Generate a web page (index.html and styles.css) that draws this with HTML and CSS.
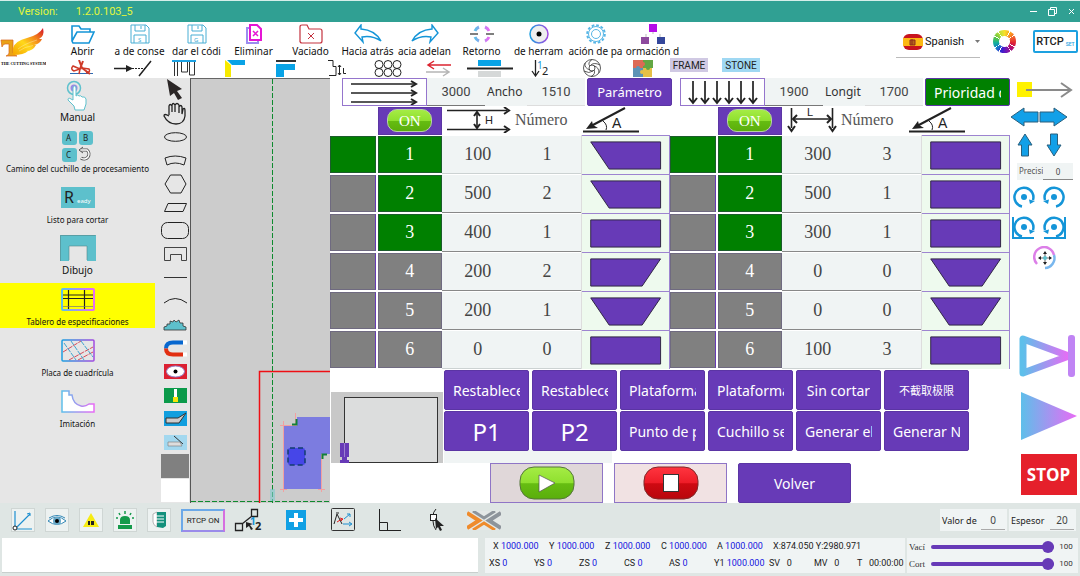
FILE: index.html
```
<!DOCTYPE html>
<html lang="es">
<head>
    <meta charset="UTF-8">
    <title>Version: 1.2.0.103_5</title>
    <link rel="stylesheet" href="styles.css">
</head>
<body>
  <svg class="defs" width="0" height="0">
    <defs>
      <linearGradient id="cyanPink"><stop offset="0" stop-color="#5ebfea"/><stop offset="1" stop-color="#e86bf5"/></linearGradient>
      <linearGradient id="bluePurple"><stop offset="0" stop-color="#1d9fe0"/><stop offset="1" stop-color="#a24be0"/></linearGradient>
      <linearGradient id="fire" x1="0" y1="1" x2="1" y2="0"><stop offset="0" stop-color="#f5a300"/><stop offset=".4" stop-color="#ffd81a"/><stop offset=".7" stop-color="#f2801c"/><stop offset="1" stop-color="#d3102a"/></linearGradient>
      <linearGradient id="green" x2="0" y2="1"><stop offset="0" stop-color="#a5ec45"/><stop offset=".5" stop-color="#8fe02f"/><stop offset=".52" stop-color="#66bd12"/><stop offset="1" stop-color="#5aae0c"/></linearGradient>
      <linearGradient id="red" x2="0" y2="1"><stop offset="0" stop-color="#ff3540"/><stop offset=".5" stop-color="#ee1c27"/><stop offset=".52" stop-color="#cf0a12"/><stop offset="1" stop-color="#b8060c"/></linearGradient>
    </defs>
    <symbol id="shape-left" viewBox="0 0 90 38"><path d="M9 5.500H81V33.500H28z" class="shape"/></symbol>
    <symbol id="shape-rect" viewBox="0 0 90 38"><path d="M9 5.500H81V33.500H9z" class="shape"/></symbol>
    <symbol id="shape-right" viewBox="0 0 90 38"><path d="M9 5.500H81L62 33.500H9z" class="shape"/></symbol>
    <symbol id="shape-trap" viewBox="0 0 90 38"><path d="M9 5.500H81L62 33.500H28z" class="shape"/></symbol>
    <symbol id="angle" viewBox="0 0 58 28">
      <path d="M0 25.500H56M42 2L8 20" stroke="#222" stroke-width="2" fill="none"/>
      <path d="M3 23L9 15L10 19L15 22z" fill="#222"/>
      <path d="M20 15q5 4 3 9" stroke="#222" fill="none"/>
    </symbol>
    <symbol id="rotate" viewBox="0 0 24 22">
      <path d="M10 20.500A9.500 9.500 0 1 1 21 14" fill="none" stroke="#1495d8" stroke-width="2.500"/>
      <path d="M17 13.500L23 15L18 18z" fill="#1495d8"/><circle cx="12" cy="11" r="3" fill="#1495d8"/>
    </symbol>
  </svg>

  <header class="title-bar">
    <span>Version:</span>
    <span class="version-number">1.2.0.103_5</span>
    <div class="window-buttons">
      <button aria-label="Minimize"><svg width="9" height="9"><path d="M1 4.500H8"/></svg></button>
      <button aria-label="Restore"><svg width="9" height="9"><path d="M.5 2.500H6.500V8.500H.5zM2.500 2V.5H8.500V6.500H7"/></svg></button>
      <button aria-label="Close"><svg width="9" height="9"><path d="M2 2L7 7M7 2L2 7"/></svg></button>
    </div>
  </header>

  <div class="top">
    <div class="logo">
      <svg width="46" height="42" viewBox="0 0 46 42">
        <path d="M1 13H13V26Q14 28 17 29H6Q9 28 9 26V17H5Q3 17 2 20z" fill="#e9a116" stroke="#d8641c" stroke-width=".7"/>
        <path d="M13 28V21Q15 14 27 11Q39 8 43 1Q45 9 39 12H42Q40 17 34 18H36Q33 24 26 24H28Q24 28 13 28z" fill="url(#fire)"/>
        <path d="M18 22Q24 17 37 13M19 24Q24 20 33 18.500" stroke="#fff3c0" stroke-width=".4" fill="none"/>
        <text x="1" y="38" class="logo-text">THE CUTTING SYSTEM</text>
      </svg>
    </div>

    <div class="toolbars">
      <div class="toolbar">
        <button><svg width="24" height="20" viewBox="0 0 24 20"><path d="M1 17V2H8L10 5H19V8M1 17L6 8H23L18 19H2z" fill="none" stroke="#1495d8" stroke-width="1.600"/></svg><span>Abrir</span></button>
        <button><svg width="20" height="20" viewBox="0 0 20 20"><path d="M1 1H16L19 4V19H1zM5 1V7H15V1M11 2V5M4 19V11H16V19" fill="none" stroke="#49aed4"/><text x="8" y="18" class="disk">S</text></svg><span>a de conse</span></button>
        <button><svg width="20" height="20" viewBox="0 0 20 20"><path d="M1 1H16L19 4V19H1zM5 1V7H15V1M11 2V5M4 19V11H16V19" fill="none" stroke="#49aed4"/><text x="7" y="18" class="disk">G</text></svg><span>dar el códi</span></button>
        <button><svg width="16" height="20" viewBox="0 0 16 20"><path d="M3 4H1V19H12V17" fill="none" stroke="#9b8cf0" stroke-width="2"/><path d="M4 1H11L15 5V16H4z" fill="#fff" stroke="#e515d5" stroke-width="2"/><path d="M7 7L12 12M12 7L7 12" stroke="#e515d5" stroke-width="1.500"/></svg><span>Eliminar</span></button>
        <button><svg width="24" height="20" viewBox="0 0 24 20"><path d="M1 18V3Q1 1 3 1H8L10 5H21Q23 5 23 7V17Q23 19 21 19H3Q1 19 1 17z" fill="none" stroke="#c4323f" stroke-width="1.200"/><path d="M9 9L15 15M15 9L9 15" stroke="#c4323f"/></svg><span>Vaciado</span></button>
        <button><svg width="28" height="20" viewBox="0 0 28 20"><path d="M1 9L7 1V5Q21 6 27 17Q18 11 8 13L9 18z" fill="none" stroke="#1495d8" stroke-width="1.400"/></svg><span>Hacia atrás</span></button>
        <button><svg width="28" height="20" viewBox="0 0 28 20"><path d="M27 9L21 1V5Q7 6 1 17Q10 11 20 13L19 18z" fill="none" stroke="#1495d8" stroke-width="1.400"/></svg><span>acia adelan</span></button>
        <button><svg width="24" height="20" viewBox="0 0 24 20"><path d="M5 7A7.500 7.500 0 0 1 9 3M15 3A7.500 7.500 0 0 1 19 7M19 13A7.500 7.500 0 0 1 15 17M9 17A7.500 7.500 0 0 1 5 13" fill="none" stroke="url(#cyanPink)" stroke-width="3"/><path d="M0 10H8M16 10H24" stroke="#555" stroke-width="1.500"/></svg><span>Retorno</span></button>
        <button><svg width="20" height="20" viewBox="0 0 20 20"><circle cx="10" cy="10" r="9" fill="#eee" stroke="url(#bluePurple)" stroke-width="1.500"/><circle cx="10" cy="10" r="2.500"/></svg><span>de herram</span></button>
        <button><svg width="20" height="20" viewBox="0 0 20 20"><circle cx="10" cy="10" r="8.800" fill="none" stroke="#57b6e6" stroke-width="2" stroke-dasharray="2.700 1.900"/><circle cx="10" cy="10" r="7.500" fill="#fff" stroke="#57b6e6"/><circle cx="10" cy="10" r="4.500" fill="none" stroke="#57b6e6"/></svg><span>ación de pa</span></button>
        <button><svg width="26" height="20" viewBox="0 0 26 20"><path d="M13 8V10M6 10V13M20 10V13" stroke="#bbb"/><rect x="9" width="8" height="8" fill="#b50de8"/><rect x="1" y="13" width="8" height="7" fill="#8d4a9e"/><rect x="17" y="13" width="8" height="7" fill="#34479b"/></svg><span>ormación d</span></button>
      </div>

      <div class="toolbar-small">
        <button aria-label="Cortar"><svg width="24" height="17" viewBox="0 0 24 17"><path d="M0 13.500H23" stroke="#2b6cb5"/><path d="M9 0L12 8L20 14M13 1L10 9" fill="none" stroke="#cf3a28" stroke-width="2"/><path d="M10 9L3 6Q0 9 4 11zM12 8L19 9Q21 12 16 13M10 9L9 14" fill="none" stroke="#cf3a28" stroke-width="1.500"/></svg></button>
        <button aria-label="Extender"><svg width="38" height="17" viewBox="0 0 38 17"><path d="M0 8.500H13M25 16L37 1" stroke="#222" stroke-width="1.500"/><path d="M12 5L19 8.500L12 12z" fill="#222"/><path d="M18 8.500H31" stroke="#222" stroke-dasharray="2 1"/></svg></button>
        <button aria-label="Perfil"><svg width="24" height="17" viewBox="0 0 24 17"><path d="M0 1H24" stroke="#1ba1e2" stroke-width="2"/><path d="M2.500 2V16M5.500 2V16M9.500 2V12H15.500V2M17.500 2V15H22.500V2" fill="none" stroke="#333"/></svg></button>
        <button aria-label="Esquina"><svg width="20" height="17" viewBox="0 0 20 17"><path d="M0 0L6 5V17H0z" fill="#f7ea00"/><path d="M2 0H20V5H7z" fill="#09a3e6"/></svg></button>
        <button aria-label="Escuadra"><svg width="20" height="17" viewBox="0 0 20 17"><path d="M0 1H20" stroke="#333" stroke-width="2"/><path d="M0 4H19V10H8V17H0z" fill="#09a3e6"/></svg></button>
        <button aria-label="Medida L"><svg width="18" height="17" viewBox="0 0 18 17"><path d="M0 .5H5V6.500H8V15.500H1" fill="none" stroke="#222"/><path d="M11.500 5V15M10 7L11.500 5L13 7M10 13L11.500 15L13 13M15.500 8V13.500H18" fill="none" stroke="#222"/></svg></button>
        <button aria-label="Matriz"><svg width="28" height="17" viewBox="0 0 28 17"><g fill="none" stroke="#222"><circle cx="5" cy="4.500" r="4"/><circle cx="14" cy="4.500" r="4"/><circle cx="23" cy="4.500" r="4"/><circle cx="5" cy="12.500" r="4"/><circle cx="14" cy="12.500" r="4"/><circle cx="23" cy="12.500" r="4"/></g></svg></button>
        <button aria-label="Invertir"><svg width="26" height="17" viewBox="0 0 26 17"><path d="M25 5H2M8 1L2 5L8 9" fill="none" stroke="#dc2430" stroke-width="1.500"/><path d="M0 12H23M17 8L23 12L17 16" fill="none" stroke="#b5b5b5" stroke-width="1.500"/></svg></button>
        <button aria-label="Espejo"><svg width="46" height="17" viewBox="0 0 46 17"><rect x="11" width="23" height="6" fill="#09a3e6"/><rect x="11" y="11" width="23" height="6" fill="#d5d8d8"/><path d="M0 8.500H46" stroke="#222" stroke-width="2"/></svg></button>
        <button aria-label="Ordenar"><svg width="20" height="17" viewBox="0 0 20 17"><path d="M4.500 0V15M1 11L4.500 16L8 11" fill="none" stroke="#222" stroke-width="1.300"/><text x="6" y="9" class="n1">1</text><text x="11" y="15" class="n2">2</text></svg></button>
        <button aria-label="Girar"><svg width="20" height="18" viewBox="0 0 20 18"><g fill="none" stroke="#333" stroke-width=".8"><circle cx="10" cy="9" r="8.500"/><circle cx="10" cy="9" r="3"/><path d="M10 .5Q5 4 8 7M18 6Q12 3 9 6M17 14Q17 8 12 7M9 17.500Q14 15 12 11M2 12Q7 15 11 12M3 4Q2 9 8 11"/></g></svg></button>
        <button aria-label="Anidar"><svg width="22" height="17" viewBox="0 0 22 17"><rect x="1" width="10" height="8" fill="#dd6a55"/><rect x="11" width="10" height="8" fill="#63a744"/><rect x="1" y="8" width="10" height="9" fill="#5d93b6"/><rect x="11" y="8" width="9" height="9" fill="#e6c046"/><circle cx="11" cy="4" r="2" fill="#dd6a55"/><circle cx="16" cy="8" r="2" fill="#63a744"/><circle cx="6" cy="8" r="2" fill="#5d93b6"/><circle cx="10" cy="12" r="2" fill="#e6c046"/></svg></button>
        <button class="tag tag-frame">FRAME</button>
        <button class="tag tag-stone">STONE</button>
      </div>
    </div>

    <div class="settings">
      <label class="language">
        <svg width="20" height="16" viewBox="0 0 20 16"><rect y="0" width="20" height="16" rx="6" fill="#c8141e"/><path d="M0 4H20V12H0z" fill="#fcb813"/><path d="M7 6H12V11H7zM9 5V11" fill="#b5651d" stroke="#8c2a1a"/></svg>
        <select aria-label="Language"><option>Spanish</option></select>
        <svg width="5" height="3" viewBox="0 0 5 3"><path d="M0 0H5L2.500 3z" fill="#777"/></svg>
      </label>
      <button class="wheel" aria-label="Color"></button>
      <button class="rtcp-set">RTCP <small>SET</small></button>
    </div>
  </div>

  <main class="workspace">
    <nav class="modes">
      <a href="#"><svg width="24" height="31" viewBox="0 0 24 31"><circle cx="8" cy="8" r="6.500" fill="none" stroke="#5ec1cd" stroke-width="1.500"/><circle cx="8" cy="8" r="3.500" fill="#9a88e5"/><path d="M7 8Q7 6 8.500 6T10 8V16Q12 14 13 16Q15 15 16 17Q19 16 20 19V24L18 30H9L8 26L2 20Q2 17 5 19L7 20z" fill="#fff" stroke="#5ec1cd"/></svg><span class="big">Manual</span></a>
      <a href="#"><svg width="32" height="31" viewBox="0 0 32 31"><g fill="#5dc0cc"><rect width="15" height="14" rx="3"/><rect x="17" width="14" height="14" rx="3"/><rect y="17" width="15" height="14" rx="3"/></g><g class="key"><text x="4" y="10">A</text><text x="21" y="10">B</text><text x="4" y="27">C</text></g><path d="M19 19H25A5 5 0 1 1 19 27" fill="none" stroke="#555" stroke-width="3"/><path d="M19 19H25A5 5 0 1 1 19 27" fill="none" stroke="#fff" stroke-width="1.500"/><path d="M21 16L17 19L21 22" fill="none" stroke="#555"/></svg><span>Camino del cuchillo de procesamiento</span></a>
      <a href="#"><svg width="34" height="21" viewBox="0 0 34 21"><rect width="34" height="21" fill="#5dc0cc"/><text x="3" y="16" class="ready">R</text><text x="16" y="16" class="eady">eady</text></svg><span>Listo para cortar</span></a>
      <a href="#"><svg width="36" height="26" viewBox="0 0 36 26"><path d="M0 0H36V26H27V11H9V26H0z" fill="#5dc0cc"/><path d="M.5 26V.5H35.500M9 25V11H27V25" fill="none" stroke="#56868c" stroke-width=".6"/></svg><span class="big">Dibujo</span></a>
      <a href="#" class="active"><svg width="34" height="23" viewBox="0 0 34 23"><rect x="1" y="1" width="32" height="21" rx="1" fill="none" stroke="url(#cyanPink)" stroke-width="2"/><path d="M2 7H32M2 10.500H32M7.500 2V21M23.500 2V21" stroke="#222" stroke-width="1.200"/><path d="M2 18.500H32" stroke="#777" stroke-width=".7"/></svg><span>Tablero de especificaciones</span></a>
      <a href="#"><svg width="34" height="23" viewBox="0 0 34 23"><path d="M2 13L20 2M8 21L32 8M17 21L32 13" stroke="#d23b4b" stroke-width=".9" stroke-dasharray="5 1"/><path d="M3 4L15 21M10 2L23 21M20 2L32 18" stroke="#2e9ccd" stroke-width=".9" stroke-dasharray="5 1"/><rect x="1" y="1" width="32" height="21" rx="1" fill="none" stroke="url(#bluePurple)" stroke-width="1.500"/></svg><span>Placa de cuadrícula</span></a>
      <a href="#"><svg width="34" height="23" viewBox="0 0 34 23"><path d="M1 1H8V5H11Q12 14 20 16Q24 17 28 14H33V22H1z" fill="#fff" stroke="url(#cyanPink)" stroke-width="1.500"/></svg><span>Imitación</span></a>
    </nav>

    <div class="tools">
      <button aria-label="Seleccionar"><svg width="22" height="22" viewBox="0 0 22 22"><path d="M3 0L18 10L13 12L18 19L14 21L10 14L6 17z" fill="#2b2626"/></svg></button>
      <button aria-label="Mover"><svg width="24" height="23" viewBox="0 0 24 23"><path d="M6 13V4Q7 1 9 4V10V3Q10 0 12 3V10V3Q14 0 16 3V11V5Q18 2 19 5V12L20 7Q22 5 22 9V14Q21 22 13 22Q5 22 1 14Q1 11 6 14" fill="none" stroke="#222" stroke-width="1.300"/></svg></button>
      <button aria-label="Elipse"><svg width="23" height="10"><ellipse cx="11.500" cy="5" rx="11" ry="4.300" fill="none" stroke="#222"/></svg></button>
      <button aria-label="Sector"><svg width="23" height="11"><path d="M1 3Q11-1 22 3L20 10Q11 6 3 10z" fill="none" stroke="#222"/></svg></button>
      <button aria-label="Hexágono"><svg width="23" height="20"><path d="M6.500 1H17L22 10L17 19H6.500L1 10z" fill="none" stroke="#222"/></svg></button>
      <button aria-label="Paralelogramo"><svg width="23" height="9"><path d="M4 .5H22.500L19 8.500H.5z" fill="none" stroke="#222"/></svg></button>
      <button aria-label="Rectángulo"><svg width="28" height="17"><rect x=".5" y=".5" width="27" height="16" rx="6" fill="none" stroke="#222"/></svg></button>
      <button aria-label="Muesca"><svg width="23" height="15"><path d="M.5 .5H22.500V13.500H17.500V7.500H6.500V13.500H.5z" fill="none" stroke="#444"/></svg></button>
      <button aria-label="Línea"><svg width="23" height="3"><path d="M0 1.500H23" stroke="#333"/></svg></button>
      <button aria-label="Arco"><svg width="23" height="6"><path d="M0 5Q11-4 23 5" fill="none" stroke="#222"/></svg></button>
      <button aria-label="Sierra"><svg width="24" height="12"><path d="M1 11L1 8L4 7L4 5L7 5L7 2L10 3L11 1L13 3L16 1L17 4L20 4L20 7L23 8L23 11z" fill="#5dc0cc" stroke="#333" stroke-width=".8"/></svg></button>
      <button aria-label="Imán"><svg width="23" height="17" viewBox="0 0 23 17"><path d="M19 2.500H9Q2 2.500 2 8.500" fill="none" stroke="#0767cf" stroke-width="4"/><path d="M2 8.500Q2 14.500 9 14.500H19" fill="none" stroke="#e22f12" stroke-width="4"/><path d="M19 2.500H23M19 14.500H23" stroke="#fff" stroke-width="4"/></svg></button>
      <button aria-label="Ver"><svg width="23" height="15"><rect width="23" height="15" fill="#dc2032"/><ellipse cx="11.500" cy="7.500" rx="9" ry="5.500" fill="#fff" stroke="#9383c9"/><circle cx="11.500" cy="7.500" r="2"/></svg></button>
      <button aria-label="Pincel"><svg width="23" height="15"><rect width="23" height="15" fill="#0b9a4a"/><path d="M10 1H13V9H10z" fill="#fff"/><path d="M9 9H14V14H9z" fill="#f4e509"/></svg></button>
      <button aria-label="Editar"><svg width="23" height="15"><rect width="23" height="15" fill="#119fdf"/><path d="M2 7H14L22 2L15 12H2z" fill="#ccc" stroke="#333"/></svg></button>
      <button aria-label="Borrar"><svg width="23" height="15"><rect width="23" height="15" fill="#a3d8ef"/><path d="M4 7H16L18 11H4z" fill="#ddd" stroke="#777" stroke-width=".6"/><path d="M10 1L19 9" stroke="#333"/></svg></button>
      <button class="swatch gray" aria-label="Gris"></button>
      <button class="swatch white" aria-label="Blanco"></button>
    </div>

    <div class="canvas">
      <svg width="100%" height="100%" viewBox="0 0 139 424" preserveAspectRatio="xMinYMax slice">
        <path d="M106 338H139V375H131V410H93V346H106z" fill="#7c7ce0"/>
        <path d="M92.500 342V413M89 346.500H106M104.500 334V346M130.500 375V413M127 410.500H134M89 410.500H96" stroke="#f2a0a0"/>
        <path d="M101 345.500H105.500V340M131.500 380V375.500H136" fill="none" stroke="#12803a" stroke-width="2"/>
        <rect x="97" y="369" width="17" height="17" rx="2" fill="#4646e8" stroke="#123c70" stroke-width="1.500" stroke-dasharray="5 3"/>
        <path d="M139 292.500H68.500V424" fill="none" stroke="#ee0f14" stroke-width="1.500"/>
        <path d="M81.500 0V424M0 422.500H139" stroke="#0e8a2e" stroke-dasharray="5 2"/>
        <path d="M79 410H84V422H79z" fill="#7fc9cd" opacity=".6"/>
      </svg>
    </div>

    <section class="panel">
      <div class="params">
        <div class="param-group">
          <button class="direction" aria-label="Horizontal"><svg width="70" height="25" viewBox="0 0 70 25"><g fill="none" stroke="#222" stroke-width="1.300"><path d="M1 4H66M1 13H66M1 22H66"/><path d="M61 1L66 4L61 7M61 10L66 13L61 16M61 19L66 22L61 25" stroke-width="2"/></g></svg></button>
          <input class="first" value="3000" aria-label="Largo">
          <label for="ancho">Ancho</label>
          <input id="ancho" value="1510">
          <button class="action">Parámetro</button>
        </div>
        <div class="param-group">
          <button class="direction" aria-label="Vertical"><svg width="70" height="25" viewBox="0 0 70 25"><g fill="none" stroke="#222" stroke-width="1.700"><path d="M5 1V22M17 1V22M29 1V22M41 1V22M53 1V22M65 1V22"/><path d="M1 18L5 23L9 18M13 18L17 23L21 18M25 18L29 23L33 18M37 18L41 23L45 18M49 18L53 23L57 18M61 18L65 23L69 18" stroke-width="2"/></g></svg></button>
          <input class="first" value="1900" aria-label="Largo">
          <label for="longitud">Longit</label>
          <input id="longitud" value="1700">
          <button class="action priority"><span>Prioridad d</span></button>
        </div>
      </div>

      <div class="boards">
        <table>
          <colgroup><col class="c-mark"><col class="c-index"><col class="c-size"><col class="c-count"><col class="c-shape"></colgroup>
          <thead>
            <tr>
              <th></th>
              <th><button class="switch"><span>ON</span></button></th>
              <th colspan="3"><div class="heading">
                <svg width="64" height="26" viewBox="0 0 64 26"><path d="M0 3.500H60M0 22.500H60M30 5V21" stroke="#222" stroke-width="1.600"/><path d="M57 0L62 3.500L57 7M57 19L62 22.500L57 26M27 9L30 5L33 9M27 17L30 21L33 17" fill="none" stroke="#222" stroke-width="2"/><text x="38" y="17" class="dim">H</text></svg>
                <span>Número</span>
                <div class="angle"><svg width="58" height="28"><use href="#angle"/><text x="29" y="22" class="dim large">A</text></svg></div>
              </div></th>
            </tr>
          </thead>
          <tbody>
            <tr><td><button class="mark on" aria-label="1"></button></td><td><button class="index on">1</button></td><td><input value="100" aria-label="H 1"></td><td><input value="1" aria-label="Número 1"></td><td class="form"><svg><use href="#shape-left"/></svg></td></tr>
            <tr class="dark"><td><button class="mark" aria-label="2"></button></td><td><button class="index on">2</button></td><td><input value="500" aria-label="H 2"></td><td><input value="2" aria-label="Número 2"></td><td class="form"><svg><use href="#shape-left"/></svg></td></tr>
            <tr class="dark"><td><button class="mark" aria-label="3"></button></td><td><button class="index on">3</button></td><td><input value="400" aria-label="H 3"></td><td><input value="1" aria-label="Número 3"></td><td class="form"><svg><use href="#shape-rect"/></svg></td></tr>
            <tr class="dark"><td><button class="mark" aria-label="4"></button></td><td><button class="index">4</button></td><td><input value="200" aria-label="H 4"></td><td><input value="2" aria-label="Número 4"></td><td class="form"><svg><use href="#shape-right"/></svg></td></tr>
            <tr class="dark"><td><button class="mark" aria-label="5"></button></td><td><button class="index">5</button></td><td><input value="200" aria-label="H 5"></td><td><input value="1" aria-label="Número 5"></td><td class="form"><svg><use href="#shape-trap"/></svg></td></tr>
            <tr><td><button class="mark" aria-label="6"></button></td><td><button class="index">6</button></td><td><input value="0" aria-label="H 6"></td><td><input value="0" aria-label="Número 6"></td><td class="form"><svg><use href="#shape-rect"/></svg></td></tr>
          </tbody>
        </table>
        <table>
          <colgroup><col class="c-mark"><col class="c-index"><col class="c-size"><col class="c-count"><col class="c-shape"></colgroup>
          <thead>
            <tr>
              <th></th>
              <th><button class="switch"><span>ON</span></button></th>
              <th colspan="3"><div class="heading">
                <svg width="50" height="26" viewBox="0 0 50 26"><path d="M4.500 1V21M45.500 1V21M6 12H44" stroke="#222" stroke-width="1.600"/><path d="M1 19L4.500 24L8 19M42 19L45.500 24L49 19M10 8L6 12L10 16M40 8L44 12L40 16" fill="none" stroke="#222" stroke-width="2"/><text x="20" y="9" class="dim">L</text></svg>
                <span>Número</span>
                <div class="angle"><svg width="58" height="28"><use href="#angle"/><text x="29" y="22" class="dim large">A</text></svg></div>
              </div></th>
            </tr>
          </thead>
          <tbody>
            <tr><td><button class="mark on" aria-label="1"></button></td><td><button class="index on">1</button></td><td><input value="300" aria-label="L 1"></td><td><input value="3" aria-label="Número 1"></td><td class="form"><svg><use href="#shape-rect"/></svg></td></tr>
            <tr class="dark"><td><button class="mark" aria-label="2"></button></td><td><button class="index on">2</button></td><td><input value="500" aria-label="L 2"></td><td><input value="1" aria-label="Número 2"></td><td class="form"><svg><use href="#shape-rect"/></svg></td></tr>
            <tr class="dark"><td><button class="mark" aria-label="3"></button></td><td><button class="index on">3</button></td><td><input value="300" aria-label="L 3"></td><td><input value="1" aria-label="Número 3"></td><td class="form"><svg><use href="#shape-rect"/></svg></td></tr>
            <tr class="dark"><td><button class="mark" aria-label="4"></button></td><td><button class="index">4</button></td><td><input value="0" aria-label="L 4"></td><td><input value="0" aria-label="Número 4"></td><td class="form"><svg><use href="#shape-trap"/></svg></td></tr>
            <tr class="dark"><td><button class="mark" aria-label="5"></button></td><td><button class="index">5</button></td><td><input value="0" aria-label="L 5"></td><td><input value="0" aria-label="Número 5"></td><td class="form"><svg><use href="#shape-trap"/></svg></td></tr>
            <tr><td><button class="mark" aria-label="6"></button></td><td><button class="index">6</button></td><td><input value="100" aria-label="L 6"></td><td><input value="3" aria-label="Número 6"></td><td class="form"><svg><use href="#shape-rect"/></svg></td></tr>
          </tbody>
        </table>
      </div>

      <div class="commands">
        <div class="preview">
          <svg width="112" height="71" viewBox="0 0 112 71"><rect x="13.500" y="5.500" width="93" height="65" fill="#dcdddd" stroke="#333"/><path d="M9 51H18V65H9zM11 65H16V71H11zM9 68H18V71H9z" fill="#673ab7"/><path d="M13.500 51V65" stroke="#9c80d0"/></svg>
        </div>
        <div class="command-grid">
          <button class="action"><span>Restablece</span></button>
          <button class="action"><span>Restablece</span></button>
          <button class="action"><span>Plataforma</span></button>
          <button class="action"><span>Plataforma</span></button>
          <button class="action"><span>Sin cortar</span></button>
          <button class="action chinese"><span>不截取极限</span></button>
          <button class="action point">P1</button>
          <button class="action point">P2</button>
          <button class="action"><span>Punto de p</span></button>
          <button class="action"><span>Cuchillo se</span></button>
          <button class="action"><span>Generar el</span></button>
          <button class="action"><span>Generar N</span></button>
        </div>
      </div>

      <div class="run">
        <button class="play" aria-label="Iniciar"><svg width="56" height="34" viewBox="0 0 56 34"><rect x="1" y="1" width="54" height="32" rx="14" fill="url(#green)" stroke="#55753a"/><path d="M20 9L36 17L20 26z" fill="#fff" stroke="#555" stroke-width=".7"/></svg></button>
        <button class="stop" aria-label="Parar"><svg width="56" height="34" viewBox="0 0 56 34"><rect x="1" y="1" width="54" height="32" rx="14" fill="url(#red)" stroke="#7d2a2a"/><rect x="20.500" y="8.500" width="15" height="17" fill="#fff" stroke="#333"/></svg></button>
        <button class="action">Volver</button>
      </div>
    </section>

    <aside class="jog">
      <button aria-label="Origen"><svg width="58" height="18" viewBox="0 0 58 18"><rect x="1" y="1" width="15" height="15" fill="#fff200"/><path d="M10 9H55M45 2L55 9L45 16" fill="none" stroke="#8a8a8a" stroke-width="2"/></svg></button>
      <button class="x-axis" aria-label="Eje X"><svg width="58" height="20" viewBox="0 0 58 20"><g fill="#12a0e8" stroke="#2a5f7d"><path d="M1 10L14 1V5H28V15H14V19z"/><path d="M57 10L44 1V5H30V15H44V19z"/></g></svg></button>
      <button aria-label="Eje Y"><svg width="58" height="24" viewBox="0 0 58 24"><g fill="#12a0e8" stroke="#2a5f7d"><path d="M9 1L16 12H12.500V23H5.500V12H2z"/><path d="M38 23L31 12H34.500V1H41.500V12H45z"/></g></svg></button>
      <div class="precision"><label for="precision">Precisi</label><input id="precision" value="0"></div>
      <div class="pair">
        <button aria-label="Girar izquierda"><svg width="24" height="22"><use href="#rotate"/></svg></button>
        <button class="flip" aria-label="Girar derecha"><svg width="24" height="22"><use href="#rotate"/></svg></button>
      </div>
      <div class="pair second">
        <button aria-label="Girar izquierda 90"><svg width="24" height="24" viewBox="0 0 24 24"><path d="M1 1V22H22" fill="none" stroke="#1495d8" stroke-width="2"/><use href="#rotate" width="24" height="22"/></svg></button>
        <button class="flip" aria-label="Girar derecha 90"><svg width="24" height="24" viewBox="0 0 24 24"><path d="M1 1V22H22" fill="none" stroke="#1495d8" stroke-width="2"/><use href="#rotate" width="24" height="22"/></svg></button>
      </div>
      <button class="center" aria-label="Centrar"><svg width="24" height="24" viewBox="0 0 24 24"><path d="M4 18A10 10 0 1 1 21 9" fill="none" stroke="#dc7fe8" stroke-width="2.500"/><path d="M21 9A10 10 0 0 1 12 22" fill="none" stroke="#79b7ee" stroke-width="2.500"/><path d="M12 6V18M6 12H18" stroke="#222" stroke-width=".7"/><path d="M12 5L14 8H10zM12 19L14 16H10zM5 12L8 10V14zM19 12L16 10V14z" fill="#222"/><circle cx="12" cy="12" r="2" fill="#5ec1cd"/></svg></button>
      <div class="transport">
        <button aria-label="Siguiente"><svg width="58" height="44" viewBox="0 0 58 44"><path d="M4 5V39L50 22z" fill="none" stroke="url(#cyanPink)" stroke-width="7" stroke-linejoin="round"/><rect x="49" y="1" width="7" height="42" rx="3" fill="#c084f4"/></svg></button>
        <button class="play-all" aria-label="Reproducir"><svg width="56" height="48" viewBox="0 0 56 48"><path d="M0 0V48L56 24z" fill="url(#cyanPink)"/></svg></button>
        <button class="emergency">STOP</button>
      </div>
    </aside>
  </main>

  <footer class="bottom">
    <div class="view-bar">
      <div class="view-buttons">
        <button class="tile" aria-label="Ejes"><svg width="22" height="22" viewBox="0 0 22 22"><path d="M3 2V20H20M3 20L18 5" fill="none" stroke="#1d8fd0" stroke-width="1.200"/><circle cx="3" cy="19" r="2" fill="#fff" stroke="#222"/><path d="M15 5L18 4V7" fill="none" stroke="#1d8fd0"/></svg></button>
        <button class="tile" aria-label="Vista"><svg width="22" height="22" viewBox="0 0 22 22"><path d="M3 9Q11 4 19 9M2 12Q11 4 20 12Q11 19 2 12z" fill="#fff" stroke="#3187b5"/><circle cx="11" cy="12" r="4" fill="#69a9c8"/><circle cx="11" cy="12" r="2"/></svg></button>
        <button class="tile" aria-label="Aviso"><svg width="22" height="22" viewBox="0 0 22 22"><path d="M11 4L19 18H3z" fill="#f6ec13"/><path d="M8 12H10V16H8zM11 12H14V16H11z" fill="#222"/></svg></button>
        <button class="tile" aria-label="Alarma"><svg width="22" height="22" viewBox="0 0 22 22"><path d="M6 15V11Q6 7 11 7T16 11V15zM4 16H18V20H4z" fill="#159a4b"/><path d="M11 2V5M5 4L6 6M17 4L16 6M2 9H4M18 9H20" stroke="#159a4b" stroke-width="1.500"/></svg></button>
        <button class="tile" aria-label="Pieza"><svg width="22" height="22" viewBox="0 0 22 22"><path d="M5 5L9 3V18Q5 16 5 13z" fill="#fff" stroke="#999" stroke-width=".7"/><path d="M9 3H18V17L15 19L9 18z" fill="#13907c"/><path d="M8 7H16M8 10H16M8 13H16" stroke="#fff"/></svg></button>
        <button class="rtcp-on">RTCP ON</button>
        <button class="wide" aria-label="Orden"><svg width="30" height="24" viewBox="0 0 30 24"><path d="M1.500 15.500H8.500V22.500H1.500zM17.500 1.500H23.500V8.500H17.500zM8 16L18 8" fill="none" stroke="#222" stroke-width="1.300"/><path d="M12 14L19 16L16 17L19 21L17 22L15 18L12 20z" fill="#222"/><text x="16" y="17" class="n1 bold">1</text><text x="21" y="22" class="n2 bold">2</text></svg></button>
        <button class="wide" aria-label="Añadir"><svg width="20" height="20" viewBox="0 0 20 20"><rect width="20" height="20" fill="#10a0e4"/><path d="M10 3V17M3 10H17" stroke="#fff" stroke-width="4"/></svg></button>
        <button class="wide" aria-label="Robot"><svg width="24" height="24" viewBox="0 0 24 24"><rect x=".5" y=".5" width="23" height="22" rx="1" fill="none" stroke="#333"/><path d="M3 16L6 6L11 16M5 5H8" fill="none" stroke="#222"/><path d="M6 14L11 11M9 10L12 11L10 13" fill="none" stroke="#d22"/><path d="M13 11L19 6M16 6H19V9M12 16H20M18 14L21 16L18 18" fill="none" stroke="#1d8fd0"/></svg></button>
        <button class="wide" aria-label="Ángulo"><svg width="24" height="24" viewBox="0 0 24 24"><path d="M1.500 1V22.500H23M1.500 14.500H9.500V22" fill="none" stroke="#222"/></svg></button>
        <button class="wide" aria-label="Nodo"><svg width="18" height="24" viewBox="0 0 18 24"><path d="M8 1Q5 4 5 8M5 13Q5 18 8 22" fill="none" stroke="#222"/><rect x="2.500" y="6.500" width="6" height="6" fill="#fff" stroke="#222"/><path d="M7 10L16 18L12 18L14 22L12 23L10 19L8 21z" fill="#222"/></svg></button>
        <button class="wide" aria-label="Cruce"><svg width="34" height="19" viewBox="0 0 34 19"><rect width="34" height="19" fill="#e4e8e7"/><path d="M0 2L12 9.500L0 17" fill="none" stroke="#ef8b2c" stroke-width="4"/><path d="M34 2L22 9.500L34 17" fill="none" stroke="#8d949b" stroke-width="4"/><path d="M6 0L17 7L28 0" fill="none" stroke="#8d949b" stroke-width="3"/><path d="M6 19L17 12L28 19" fill="none" stroke="#ef8b2c" stroke-width="3"/></svg></button>
      </div>
      <div class="field"><label for="valor">Valor de</label><input id="valor" value="0"></div>
      <div class="field"><label for="espesor">Espesor</label><input id="espesor" value="20"></div>
    </div>

    <div class="status-bar">
      <textarea class="log" aria-label="Registro"></textarea>
      <div class="status">
        <div class="axes">
          <span>X <b>1000.000</b></span><span>Y <b>1000.000</b></span><span>Z <b>1000.000</b></span><span>C <b>1000.000</b></span><span>A <b>1000.000</b></span><span class="cursor">X:874.050 Y:2980.971</span>
        </div>
        <div class="speeds">
          <span>XS <b>0</b></span><span>YS <b>0</b></span><span>ZS <b>0</b></span><span>CS <b>0</b></span><span>AS <b>0</b></span><span>Y1 <b>1000.000</b></span><span>SV &nbsp; 0</span><span>MV &nbsp; 0</span><span>T &nbsp; 00:00:00</span>
        </div>
      </div>
      <div class="sliders">
        <label for="vacio">Vací</label><input type="range" id="vacio" value="100"><output>100</output>
        <label for="corte">Cort</label><input type="range" id="corte" value="100"><output>100</output>
      </div>
    </div>
  </footer>
</body>
</html>
```
FILE: styles.css
```
* {
  box-sizing: border-box;
}

body {
  margin: 0;
  min-height: 100vh;
  display: flex;
  flex-direction: column;
  background-color: #fff;
  font-family: "Noto Sans", "Noto Sans CJK SC", sans-serif;
  font-size: 10px;
  color: #222;
}

button {
  display: flex;
  align-items: center;
  justify-content: center;
  margin: 0;
  padding: 0;
  border: 0;
  background: none;
  color: inherit;
  font-family: inherit;
  font-size: inherit;
}

input {
  min-width: 0;
  margin: 0;
  padding: 0;
  border: 0;
  background-color: #f0f4f4;
  color: #444;
  font-family: inherit;
  font-size: inherit;
  text-align: center;
}

svg {
  display: block;
  flex: none;
}

.defs {
  position: absolute;
}

/* title */
.title-bar {
  display: flex;
  align-items: center;
  height: 22px;
  padding: 0 4px 0 18px;
  border-top: 1px solid #d5eeea;
  background-color: #30a093;
  color: #e3f63c;
  font-family: Roboto, sans-serif;
  font-size: 11px;
}

.version-number {
  margin-left: 18px;
}

.window-buttons {
  display: flex;
  gap: 10px;
  margin-left: auto;
}

.window-buttons path {
  fill: none;
  stroke: #fff;
}

/* toolbars */
.top {
  display: flex;
  height: 56px;
}

.logo {
  width: 54px;
  padding-top: 5px;
}

.logo-text {
  font-size: 4px;
  font-weight: bold;
  font-family: "Liberation Serif", serif;
}

.toolbar {
  display: flex;
  padding-top: 2px;
}

.toolbar button {
  width: 57px;
  flex-direction: column;
}

.toolbar span {
  display: flex;
  justify-content: center;
  width: 56px;
  overflow: hidden;
  line-height: 14px;
  white-space: nowrap;
  color: #111;
}

.disk {
  font-size: 6px;
  fill: #49aed4;
}

.toolbar-small {
  display: flex;
  height: 20px;
  padding-left: 2px;
}

.toolbar-small button {
  width: 51px;
}

.n1 {
  font-size: 10px;
  fill: #1495d8;
}

.n2 {
  font-size: 11px;
  fill: #222;
}

.bold {
  font-weight: bold;
}

.toolbar-small .tag {
  width: 38px;
  height: 14px;
  margin: 0 12px 0 2px;
  font-family: Roboto, sans-serif;
  font-size: 10px;
}

.tag-frame {
  background-color: #d0c9e3;
}

.toolbar-small .tag-stone {
  background-color: #9fd8f3;
}

.settings {
  display: flex;
  align-items: flex-start;
  margin-left: auto;
  padding: 8px 2px 0 0;
}

.language {
  display: flex;
  align-items: center;
  width: 84px;
  height: 28px;
  padding: 0 0 4px 7px;
  border-bottom: 1px solid #bbb;
}

.language select {
  flex: 1;
  min-width: 0;
  padding: 0 0 0 2px;
  border: 0;
  background: none;
  appearance: none;
  font-family: Roboto, sans-serif;
  font-size: 11px;
  color: #111;
}

.wheel {
  width: 23px;
  height: 23px;
  margin: 0 17px 0 13px;
  border-radius: 50%;
  background: radial-gradient(circle, #fff 0 5px, transparent 6px),
    repeating-conic-gradient(transparent 0 26deg, #fff 26deg 30deg),
    conic-gradient(#f6e02a, #fba41d, #f2602c, #e02433, #b60d6c, #7a16b0, #3a1fd0, #1379c9, #13b29b, #5fc33f, #b8e03b, #f6e02a);
}

.rtcp-set {
  gap: 2px;
  width: 45px;
  height: 23px;
  border: 2px solid #1da1e0;
  border-radius: 2px;
  font-family: Roboto, sans-serif;
  font-size: 11px;
  font-weight: 500;
}

.rtcp-set small {
  padding-top: 4px;
  font-size: 5px;
  color: #1da1e0;
}

/* workspace */
.workspace {
  flex: 1;
  display: flex;
  min-height: 425px;
}

.modes {
  display: flex;
  flex-direction: column;
  gap: 6px;
  width: 155px;
  padding-top: 1px;
  background-color: #e6e6e6;
}

.modes a {
  display: flex;
  flex-direction: column;
  align-items: center;
  justify-content: space-between;
  height: 45px;
  color: #111;
  text-decoration: none;
}

.modes svg {
  margin: auto 0;
}

.modes span {
  font-size: 8px;
  line-height: 13px;
  white-space: nowrap;
}

.modes .big {
  font-size: 10px;
}

.modes .active {
  background-color: #ffff00;
}

.key {
  font-size: 8px;
  fill: #222;
}

.ready {
  font-size: 16px;
  fill: #222;
}

.eady {
  font-size: 6px;
  fill: #fff;
}

.tools {
  display: flex;
  flex-direction: column;
  width: 35px;
  padding-left: 6px;
  background-color: #e6e6e6;
}

.tools button {
  flex: 1;
  width: 28px;
  min-height: 0;
}

.tools .swatch {
  border-bottom: 1px solid #e6e6e6;
}

.gray {
  background-color: #808080;
}

.white {
  background-color: #fff;
}

.canvas {
  flex: 139;
  min-width: 0;
  border-top: 1px solid #666;
  border-left: 1px solid #555;
  background-color: #ccc;
}

.canvas svg {
  height: 424px;
}

.panel {
  flex: 680;
  min-width: 0;
  background-color: #fff;
}

.action {
  border: 1px solid #5b35a4;
  border-radius: 2px;
  background-color: #673ab7;
  color: #fff;
  font-size: 14px;
}

.action span {
  min-width: 0;
  overflow: hidden;
  white-space: nowrap;
}

.params {
  display: flex;
  gap: 8px;
  height: 28px;
  padding-left: 12px;
}

.param-group {
  flex: 1;
  display: flex;
  min-width: 0;
  font-size: 12px;
}

.param-group input {
  flex: 1;
  border-bottom: 1px solid #ddd;
  font-family: Roboto, sans-serif;
  font-size: 13px;
}

.param-group .first {
  border-bottom-color: #777;
}

.param-group label {
  width: 42px;
  padding-left: 2px;
  overflow: hidden;
  background-color: #f0f4f4;
  line-height: 28px;
  color: #333;
}

.param-group .direction {
  width: 85px;
  border: 1px solid #9575cd;
  background-color: #fff;
}

.param-group .action {
  width: 85px;
  margin-left: 2px;
  padding: 0 8px;
  font-size: 13px;
}

.param-group .priority {
  justify-content: flex-start;
  background-color: #008000;
  font-size: 14px;
}

/* cutting tables */
.boards {
  display: flex;
}

.boards table {
  flex: 1;
  width: 50%;
  table-layout: fixed;
  border-collapse: collapse;
  font-family: "Liberation Serif", serif;
}

.c-mark {
  width: 14%;
}

.c-index {
  width: 19%;
}

.c-size {
  width: 21%;
}

.c-count {
  width: 20%;
}

.c-shape {
  width: 26%;
}

.boards th,
.boards td {
  padding: 0;
  font-weight: normal;
}

.boards th {
  height: 29px;
}

.boards td {
  height: 39px;
}

.switch {
  width: 100%;
  height: 28px;
  border: 1px solid #5b35a4;
  background-color: #673ab7;
}

.switch span {
  width: 45px;
  height: 23px;
  border: 1px solid #b9cfa8;
  border-radius: 10px;
  background: linear-gradient(#a5ec45, #8fe02f 50%, #66bd12 52%, #5aae0c);
  color: #fff;
  font-size: 15px;
  line-height: 22px;
}

.heading {
  display: flex;
  align-items: center;
  gap: 4px;
  padding-left: 5px;
  font-size: 16px;
  color: #555;
}

.angle {
  flex: 1;
  padding-left: 12px;
}

.dim {
  font-family: "Liberation Sans", sans-serif;
  font-size: 11px;
  fill: #222;
}

.dim.large {
  font-size: 14px;
}

.mark,
.index {
  width: 100%;
  height: 37px;
  border: 1px solid #6f6a80;
  background-color: #808080;
  color: #fff;
  font-size: 18px;
}

.mark {
  width: calc(100% - 2px);
  border-right-color: #673ab7;
}

.mark.on,
.index.on {
  border-color: #1c5c2c;
  background-color: #008000;
}

.boards td input {
  display: block;
  width: 100%;
  height: 38px;
  border-bottom: 1px solid #ccd2d2;
  font-size: 18px;
}

.boards .dark input {
  border-bottom-color: #888;
}

.boards .form {
  border: 1px solid #9d84d0;
  border-bottom: 0;
  border-left-color: #ddd;
  background-color: #eefaee;
}

.form svg {
  width: 100%;
  height: 38px;
}

.shape {
  fill: #673ab7;
  stroke: #2d2440;
  stroke-width: 1px;
}

/* commands */
.commands {
  display: flex;
  background: linear-gradient(to right, transparent 114px, #f0f4f4 114px 282px, transparent 282px) bottom / 100% 13px no-repeat;
}

.preview {
  width: 114px;
  padding: 23px 1px 0;
}

.preview svg {
  background-color: #c8c8c8;
}

.command-grid {
  display: grid;
  grid-template-columns: repeat(6, 85px);
  grid-auto-rows: 40px;
  gap: 1px 3px;
  padding-top: 1px;
}

.command-grid .action {
  padding: 0 8px;
}

.command-grid .action span {
  margin: 0 auto;
}

.command-grid .point {
  font-size: 24px;
}

.command-grid .chinese {
  font-family: "Noto Sans CJK SC", sans-serif;
  font-size: 11px;
}

.run {
  display: flex;
  gap: 11px;
  padding-left: 160px;
}

.run button {
  width: 113px;
  height: 40px;
}

.run .play {
  border: 1px solid #8f75c6;
  background-color: #e0d7d9;
}

.run .stop {
  border: 1px solid #8f75c6;
  background-color: #f1e2e3;
}

/* jog column */
.jog {
  display: flex;
  flex-direction: column;
  align-items: center;
  gap: 6px;
  width: 70px;
  padding-top: 3px;
}

.x-axis {
  align-self: flex-start;
  margin-top: 2px;
}

.precision {
  display: flex;
  width: 56px;
  height: 17px;
  background-color: #f0f4f4;
  font-size: 8px;
  line-height: 16px;
  color: #555;
}

.precision label {
  padding-left: 2px;
}

.precision input {
  flex: 1;
  border-bottom: 1px solid #888;
}

.pair {
  display: flex;
  gap: 6px;
  margin-right: 12px;
}

.second {
  margin-top: 2px;
}

.flip svg {
  transform: scaleX(-1);
}

.transport {
  display: flex;
  flex-direction: column;
  align-items: flex-end;
  gap: 14px;
  margin-top: auto;
  padding: 0 0 8px 5px;
}

.emergency {
  width: 56px;
  height: 41px;
  background-color: #e5202b;
  color: #fff;
  font-family: "Open Sans", sans-serif;
  font-size: 17px;
  font-weight: bold;
}

/* bottom */
.bottom {
  background-color: #dfe6e4;
}

.view-bar {
  display: flex;
  align-items: center;
  gap: 2px;
  height: 34px;
  padding: 0 4px 0 11px;
}

.view-buttons {
  display: flex;
  align-items: center;
  flex: 1;
}

.tile {
  width: 24px;
  height: 24px;
  margin-right: 10px;
  border: 1px solid #cfd6d4;
  background-color: #edf2f1;
}

.rtcp-on {
  width: 44px;
  height: 23px;
  border: 2px solid #6ba9e8;
  border-right-color: #d66fe0;
  border-bottom-color: #9a8bea;
  font-family: Roboto, sans-serif;
  font-size: 8px;
}

.wide {
  width: 47px;
}

.field {
  display: flex;
  align-items: center;
  width: 67px;
  height: 22px;
  padding: 0 2px;
  background-color: #f0f4f4;
}

.field label {
  width: 36px;
  white-space: nowrap;
  font-size: 9px;
}

.field input {
  flex: 1;
  height: 20px;
  margin-left: 3px;
  border-bottom: 1px solid #aaa;
}

.status-bar {
  display: flex;
  gap: 2px;
  height: 39px;
  padding: 1px 2px 3px;
}

.log {
  flex: 1;
  margin-right: 5px;
  padding: 4px;
  border: 0;
  border-bottom: 1px solid #c8cfcd;
  resize: none;
  font-family: inherit;
}

.status {
  display: grid;
  grid-template-rows: 17px 17px;
  width: 420px;
  padding: 0 1px 0 4px;
  background-color: #f0f4f4;
  font-family: Roboto, sans-serif;
  font-size: 9px;
  line-height: 17px;
  white-space: nowrap;
}

.status b {
  font-weight: normal;
  color: #1414e0;
}

.axes {
  display: grid;
  grid-template-columns: repeat(5, 56px) 1fr;
  padding-left: 4px;
}

.speeds {
  display: grid;
  grid-template-columns: repeat(5, 45px) 55px 45px 43px 1fr;
}

.sliders {
  display: grid;
  grid-template-columns: 20px 123px 20px;
  grid-template-rows: 17px 17px;
  align-items: center;
  column-gap: 2px;
  width: 171px;
  padding-left: 2px;
  background-color: #f0f4f4;
  font-family: "Liberation Serif", serif;
  font-size: 9px;
  color: #333;
}

.sliders output {
  text-align: center;
  font-family: Roboto, sans-serif;
  font-size: 8px;
}

.sliders input {
  width: 100%;
  height: 12px;
  background: none;
  appearance: none;
}

.sliders input::-webkit-slider-runnable-track {
  height: 4px;
  border-radius: 2px;
  background-color: #673ab7;
}

.sliders input::-webkit-slider-thumb {
  width: 12px;
  height: 12px;
  margin-top: -4px;
  border-radius: 50%;
  background-color: #673ab7;
  appearance: none;
}
```
